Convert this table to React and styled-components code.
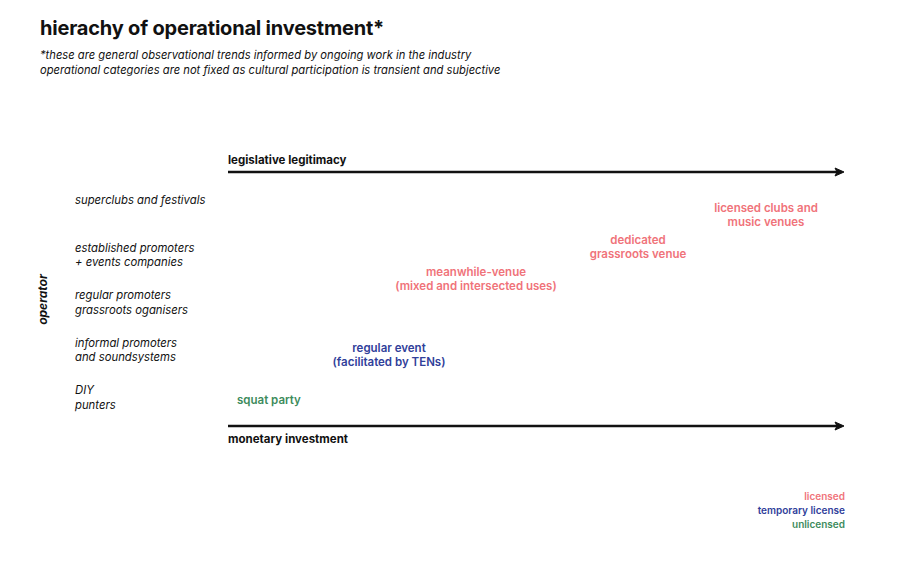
import React from "react";
import styled, { createGlobalStyle } from "styled-components";

const Global = createGlobalStyle`
  html, body { margin: 0; padding: 0; background: #fff; }
  body { font-family: Inter, "Noto Sans", "Liberation Sans", sans-serif; color: #111; }
`;

const COLORS = {
  licensed: "#f0737a",
  temporary: "#30409a",
  unlicensed: "#3d8b5c",
};

const Page = styled.div`
  width: 900px;
  height: 572px;
  box-sizing: border-box;
  padding: 16px 0 0 40px;
  overflow: hidden;
`;

const Title = styled.h1`
  margin: 0;
  font-size: 20px;
  line-height: 24px;
  font-weight: 700;
  letter-spacing: -0.2px;
  color: #111;
`;

const Subtitle = styled.p`
  margin: 8px 0 0;
  font-size: 11.2px;
  line-height: 14.5px;
  font-style: italic;
  color: #111;
`;

const Chart = styled.div`
  margin-top: 76px;
  display: grid;
  grid-template-columns: 35px 153px 617px;
  grid-template-rows: 14px 10px 244px 10px 14px;
`;

const AxisTitle = styled.div`
  grid-column: 3;
  grid-row: ${(p) => p.$row};
  margin-top: ${(p) => p.$offset || 0}px;
  font-size: 11.5px;
  line-height: 14px;
  font-weight: 700;
  color: #111;
`;

const ArrowWrap = styled.div`
  grid-column: 3;
  grid-row: ${(p) => p.$row};
  display: flex;
  align-items: center;
`;

const OperatorCol = styled.div`
  grid-column: 1;
  grid-row: 3;
  display: flex;
  align-items: center;
  justify-content: flex-start;
`;

const OperatorLabel = styled.div`
  width: 4px;
  display: flex;
  justify-content: center;
  transform: rotate(-90deg);
  white-space: nowrap;
  font-size: 12px;
  font-weight: 700;
  font-style: italic;
`;

const OperatorList = styled.div`
  grid-column: 2;
  grid-row: 3;
  display: grid;
  grid-auto-rows: 47.5px;
  padding-top: 16px;
`;

const OperatorItem = styled.div`
  font-size: 11.3px;
  line-height: 14.5px;
  font-style: italic;
  color: #111;
`;

const Plot = styled.div`
  grid-column: 3;
  grid-row: 3;
  position: relative;
`;

const Venue = styled.div`
  position: absolute;
  white-space: nowrap;
  font-size: 11.5px;
  line-height: 14px;
  font-weight: 600;
  text-align: ${(p) => (p.$center ? "center" : "left")};
  color: ${(p) => COLORS[p.$kind]};
  transform: ${(p) => (p.$center ? "translateX(-50%)" : "none")};
`;

const Legend = styled.div`
  width: 805px;
  margin-top: 44px;
  display: flex;
  flex-direction: column;
  align-items: flex-end;
`;

const LegendItem = styled.div`
  font-size: 10px;
  line-height: 14px;
  font-weight: 600;
  color: ${(p) => COLORS[p.$kind]};
`;

function Arrow() {
  return (
    <svg width="617" height="10" viewBox="0 0 617 10">
      <line x1="0" y1="5" x2="612" y2="5" stroke="#111" strokeWidth="2.4" />
      <path d="M607 1 L616 5 L607 9 L609 5 Z" fill="#111" stroke="#111" strokeWidth="1" strokeLinejoin="round" />
    </svg>
  );
}

const operators = [
  ["superclubs and festivals"],
  ["established promoters", "+ events companies"],
  ["regular promoters", "grassroots oganisers"],
  ["informal promoters", "and soundsystems"],
  ["DIY", "punters"],
];

const venues = [
  { kind: "licensed", x: 538, y: 24, center: true, lines: ["licensed clubs and", "music venues"] },
  { kind: "licensed", x: 410, y: 56, center: true, lines: ["dedicated", "grassroots venue"] },
  { kind: "licensed", x: 248, y: 88, center: true, lines: ["meanwhile-venue", "(mixed and intersected uses)"] },
  { kind: "temporary", x: 161, y: 164, center: true, lines: ["regular event", "(facilitated by TENs)"] },
  { kind: "unlicensed", x: 9, y: 216, center: false, lines: ["squat party"] },
];

export default function App() {
  return (
    <Page>
      <Global />
      <Title>hierachy of operational investment*</Title>
      <Subtitle>
        *these are general observational trends informed by ongoing work in the industry
        <br />
        operational categories are not fixed as cultural participation is transient and subjective
      </Subtitle>
      <Chart>
        <AxisTitle $row={1}>legislative legitimacy</AxisTitle>
        <ArrowWrap $row={2}>
          <Arrow />
        </ArrowWrap>
        <OperatorCol>
          <OperatorLabel>operator</OperatorLabel>
        </OperatorCol>
        <OperatorList>
          {operators.map((lines, i) => (
            <OperatorItem key={i}>
              {lines.map((l, j) => (
                <div key={j}>{l}</div>
              ))}
            </OperatorItem>
          ))}
        </OperatorList>
        <Plot>
          {venues.map((v, i) => (
            <Venue key={i} $kind={v.kind} $center={v.center} style={{ left: v.x, top: v.y }}>
              {v.lines.map((l, j) => (
                <div key={j}>{l}</div>
              ))}
            </Venue>
          ))}
        </Plot>
        <ArrowWrap $row={4}>
          <Arrow />
        </ArrowWrap>
        <AxisTitle $row={5} $offset={1}>monetary investment</AxisTitle>
      </Chart>
      <Legend>
        <LegendItem $kind="licensed">licensed</LegendItem>
        <LegendItem $kind="temporary">temporary license</LegendItem>
        <LegendItem $kind="unlicensed">unlicensed</LegendItem>
      </Legend>
    </Page>
  );
}
